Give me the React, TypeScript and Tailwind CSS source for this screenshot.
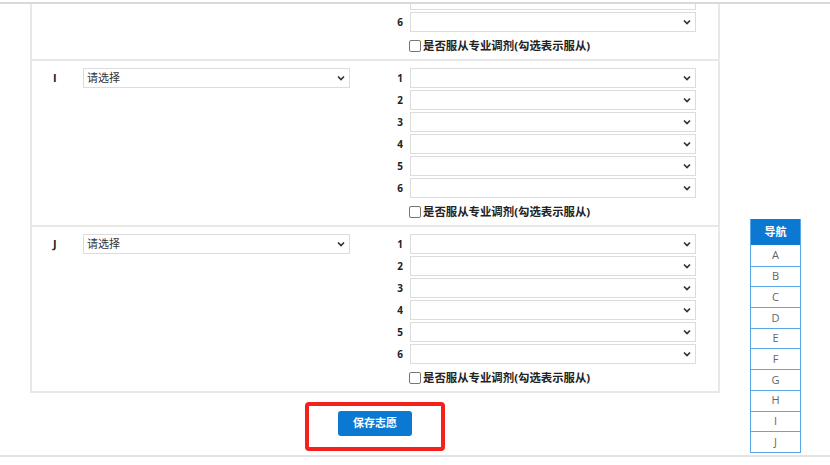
import React from "react";

const FONT = { fontFamily: '"Open Sans", "Noto Sans CJK SC", sans-serif' };

const NAV_ITEMS = ["A", "B", "C", "D", "E", "F", "G", "H", "I", "J"];

function Chevron() {
  return (
    <svg width="8" height="6" viewBox="0 0 8 6" className="shrink-0">
      <polyline points="1,1.5 4,4.5 7,1.5" fill="none" stroke="#333" strokeWidth="1.7" />
    </svg>
  );
}

function Select({ text, width }: { text?: string; width: string }) {
  return (
    <div
      className={`${width} h-[20px] border border-[#dcdcdc] bg-white flex items-center justify-between pl-[3px] pr-[4px] text-[11px] text-[#333]`}
    >
      <span>{text}</span>
      <Chevron />
    </div>
  );
}

function MajorRow({ label, divider }: { label?: string; divider: boolean }) {
  return (
    <div className={`flex pt-[7px] ${divider ? "border-t-2 border-[#e8e8e8]" : ""}`}>
      <div className="w-[51px] pl-[21px] h-[20px] flex items-center text-[11px] font-bold text-[#222]">
        {label}
      </div>
      <div className="w-[267px]">{label && <Select text="请选择" width="w-[267px]" />}</div>
      <div className="flex flex-col">
        <div className="flex flex-col gap-[2px]">
          {[1, 2, 3, 4, 5, 6].map((n) => (
            <div key={n} className="flex items-center">
              <div className="w-[60px] pr-[7px] text-right text-[10px] font-bold text-[#222]">{n}</div>
              <Select width="w-[286px]" />
            </div>
          ))}
        </div>
        <div className="h-[27px] flex items-center pl-[59px]">
          <div className="w-[12px] h-[12px] border border-[#767676] rounded-[2px] bg-white" />
          <span className="ml-[2px] text-[11.4px] font-bold text-[#222] leading-none">
            是否服从专业调剂(勾选表示服从)
          </span>
        </div>
      </div>
    </div>
  );
}

export default function App() {
  return (
    <div className="relative w-[830px] h-[465px] overflow-hidden bg-white" style={FONT}>
      <div className="h-[2px]" />
      <div className="h-[2px] bg-[#d9d9d9]" />
      <div className="h-[461px] overflow-hidden">
        <div className="-mt-[109px]">
          {/* form panel */}
          <div className="ml-[30px] w-[690px] border-x-2 border-b-2 border-[#e8e8e8]">
            <MajorRow divider={false} />
            <MajorRow label="I" divider />
            <MajorRow label="J" divider />
          </div>

          {/* save button */}
          <div className="flex justify-center mt-[9px] w-[750px]">
            <div className="w-[140px] h-[49px] border-4 border-[#f3201b] rounded-[4px] flex justify-center pt-[5px]">
              <button className="w-[74px] h-[25px] rounded-[3px] bg-[#0b78d1] text-white text-[11px] font-bold">
                保存志愿
              </button>
            </div>
          </div>

          <div className="mt-[4px] h-[2px] bg-[#e3e3e3]" />
        </div>
      </div>

      {/* fixed nav */}
      <div className="absolute left-[750px] top-[219px] w-[51px] border-x border-b border-[#5aa6e6]">
        <div className="h-[26px] bg-[#0b78d1] flex items-center justify-center text-white text-[11px] font-bold">
          导航
        </div>
        {NAV_ITEMS.map((item, i) => (
          <div
            key={item}
            className={`h-[20.7px] flex items-center justify-center text-[11px] text-[#666] bg-white ${
              i > 0 ? "border-t border-[#5aa6e6]" : ""
            }`}
          >
            {item}
          </div>
        ))}
      </div>
    </div>
  );
}
